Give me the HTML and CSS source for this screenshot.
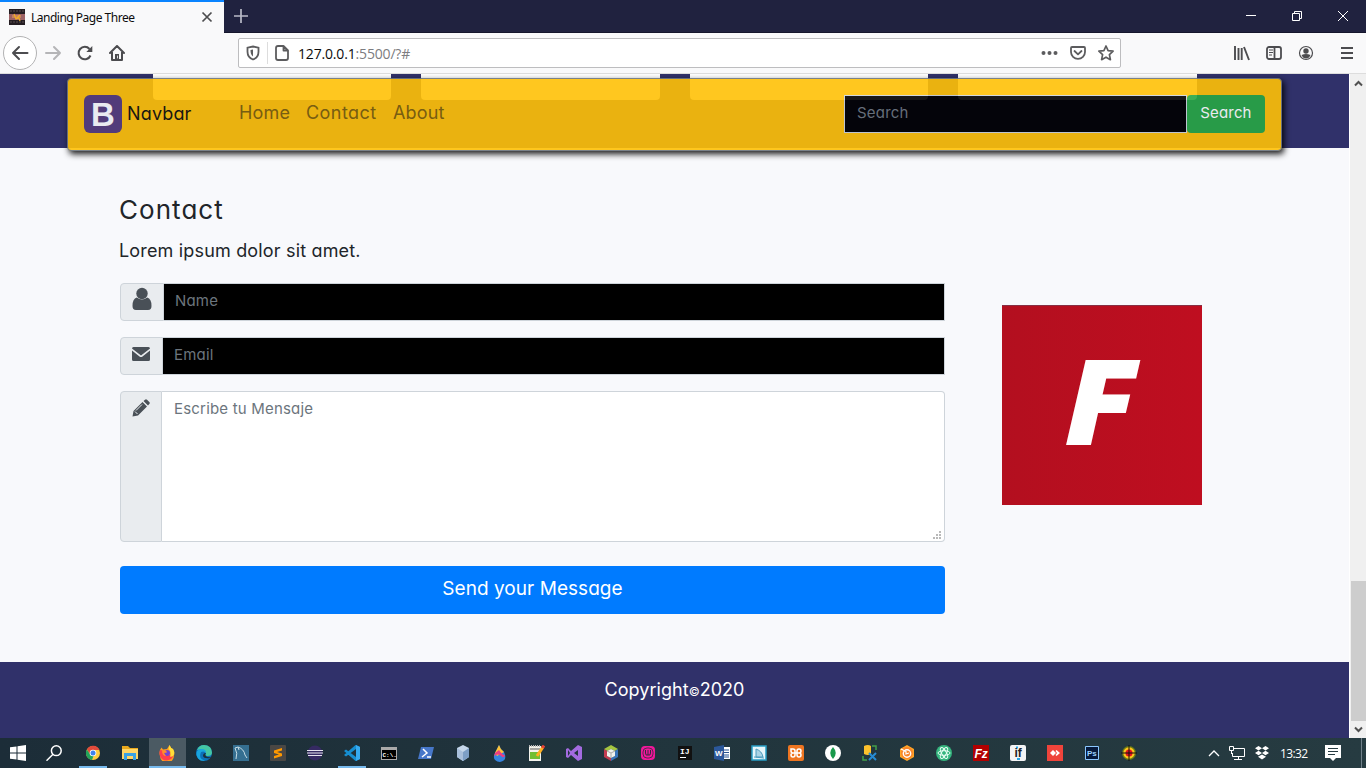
FILE: index.html
```html
<!DOCTYPE html>
<html lang="en">
<head>
<meta charset="utf-8">
<title>Landing Page Three</title>
<link rel="stylesheet" href="styles.css">
</head>
<body>
<header class="tabs">
  <div class="tab">
    <svg class="fav" width="16" height="16"><path fill="#241d22" d="M0 0h16v16H0z"/><path fill="#9c6265" d="M0 5h16v6H0z"/><path fill="#c5825d" d="M3 6h9v3H3z"/><path d="M5 5l2 5 3-1 1 3m0-6l-4 4" stroke="#f1ac28" stroke-width="1.3" fill="none"/><path d="M1 2h14M1 13h14" stroke="#5b5050" stroke-dasharray="2 1"/></svg>
    <span class="tabname">Landing Page Three</span>
    <svg width="12" height="12"><path d="M1.5 1.5l9 9m0-9l-9 9" stroke="#4d4d4f" stroke-width="1.7"/></svg>
  </div>
  <svg class="plus" width="14" height="14"><path d="M7 0v14M0 7h14" stroke="#b9bac7" stroke-width="1.7"/></svg>
  <div class="window-buttons">
    <svg width="12" height="12"><path d="M1 5.5h10" stroke="#fff"/></svg>
    <svg width="12" height="12" fill="none" stroke="#fff"><path d="M1.5 3.5h7v7h-7zM3.500 3.500v-2h7v7h-2"/></svg>
    <svg width="12" height="12"><path d="M1 1l10 10M11 1L1 11" stroke="#fff"/></svg>
  </div>
</header>
<div class="toolbar">
  <div class="back"><svg width="18" height="18" fill="none" stroke="#4c4c4f" stroke-width="2" stroke-linecap="round" stroke-linejoin="round"><path d="M16.500 9H2m6-6L2 9l6 6"/></svg></div>
  <svg class="fwd" width="18" height="18" fill="none" stroke="#b5b5b7" stroke-width="2" stroke-linecap="round" stroke-linejoin="round"><path d="M2 9h14m-6-6l6 6-6 6"/></svg>
  <svg class="reload" width="16" height="16" fill="none" stroke="#4c4c4f" stroke-width="2"><path d="M13.500 10.500A6.200 6.200 0 1 1 12.500 4"/><path d="M15.300 1v6h-6z" fill="#4c4c4f" stroke="none"/></svg>
  <svg class="home" width="16" height="16" fill="none" stroke="#4c4c4f" stroke-width="2" stroke-linejoin="round" stroke-linecap="round"><path d="M1 8l7-7 7 7M3 7v8h10V7"/><path d="M8 9v6" stroke-width="4" stroke-linecap="butt"/><path d="M8.500 11v2" stroke="#ddd" stroke-width="1"/></svg>
  <div class="address">
    <svg width="14" height="16" fill="none" stroke="#5c5c5e" stroke-width="1.800"><path d="M7 1.500l5.500 1.200v4c0 4-2 6.500-5.500 7.800C3.500 13.200 1.500 10.700 1.500 6.700v-4z"/><path d="M7 4.500v7C5 10 4.500 8 4.500 5z" fill="#5c5c5e" stroke="none"/></svg>
    <i class="sep"></i>
    <svg width="14" height="16" fill="none" stroke="#5c5c5e" stroke-width="1.800" stroke-linejoin="round"><path d="M3 1h5.500L13 5.500V13q0 2-2 2H3q-2 0-2-2V3q0-2 2-2zM8.500 1v4.500H13"/></svg>
    <span class="url">127.0.0.1<em>:5500/?#</em></span>
    <svg width="18" height="16" fill="#5c5c5e"><circle cx="3.500" cy="8" r="2"/><circle cx="9.500" cy="8" r="2"/><circle cx="15.500" cy="8" r="2"/></svg>
    <svg class="pocket" width="16" height="16" fill="none" stroke="#5c5c5e" stroke-width="1.800" stroke-linecap="round" stroke-linejoin="round"><path d="M2 2h12q1 0 1 1v4a7 6.800 0 0 1-14 0V3q0-1 1-1zM4.500 6L8 9.300 11.500 6"/></svg>
    <svg class="star" width="16" height="16" fill="none" stroke="#5c5c5e" stroke-width="1.700" stroke-linejoin="round"><path d="M8 1l2.100 4.600 5 .6-3.700 3.400 1 5.100L8 12.200l-4.400 2.500 1-5.100L.9 6.200l5-.6z"/></svg>
  </div>
  <svg class="library" width="16" height="16" stroke="#4c4c4f" stroke-width="1.900"><path d="M1 1v14M4.500 3v12M7.700 3v12M10 2L15 15"/></svg>
  <svg class="side" width="17" height="16" fill="none" stroke="#4c4c4f" stroke-width="1.800"><rect x="1" y="2" width="14" height="12" rx="2"/><path d="M8.500 2v12"/><path d="M3 5h4M3 7.500h4M3 10h3" stroke-width="1"/></svg>
  <svg class="account" width="16" height="16"><circle cx="8" cy="8" r="6.500" fill="none" stroke="#4c4c4f" stroke-width="1.200"/><circle cx="8" cy="6" r="2.700" fill="#4c4c4f"/><path d="M3.500 10q4.500-2 9 0-1.500 3.500-4.500 3.500T3.500 10" fill="#4c4c4f"/></svg>
  <i class="tool-sep"></i>
  <svg class="burger" width="12" height="14" stroke="#4c4c4f" stroke-width="2"><path d="M0 2h12M0 7h12M0 12h12"/></svg>
</div>
<div class="view">
  <main class="page">
    <section class="cards"><i></i><i></i><i></i><i></i></section>
    <nav class="navbar">
      <b class="brand-logo">B</b><span class="brand">Navbar</span>
      <span class="link home-link">Home</span><span class="link contact-link">Contact</span><span class="link about-link">About</span>
      <div class="search-field">Search</div><div class="search-button">Search</div>
    </nav>
    <section class="contact">
      <div class="form">
        <h3>Contact</h3>
        <p>Lorem ipsum dolor sit amet.</p>
        <div class="group name">
          <div class="addon"><svg width="20" height="24" fill="#495057"><circle cx="10" cy="6.500" r="5.700"/><path d="M4.800 10.500Q10 14.500 15.200 10.500 19.500 11.500 19.500 19q0 4-3.500 4H4Q.500 23 .500 19q0-7.500 4.300-8.500"/></svg></div>
          <div class="input">Name</div>
        </div>
        <div class="group email">
          <div class="addon"><svg width="18" height="14" fill="#495057"><path d="M0 1.500Q0 0 1.500 0h15Q18 0 18 1.500L9 8.500zM0 3.500l7.500 6q1.500 1 3 0l7.500-6v9q0 1.500-1.500 1.500h-15Q0 14 0 12.500z"/></svg></div>
          <div class="input">Email</div>
        </div>
        <div class="group message">
          <div class="addon"><svg width="18" height="18" fill="#495057"><path d="M.5 17.500L1.500 12 10.500 3 15 7.500 6 16.500zM11.500 2L13 .700q1-.9 2 0L17.300 3q1 1 0 2L16 6.500z"/><path d="M3 12.500l2.500 2.500M4 11.500l6-6" stroke="#e9ecef"/></svg></div>
          <div class="input">Escribe tu Mensaje<svg class="grip" width="9" height="9" fill="#b9b9b9"><path d="M6 0h2v2H6zM3 3h2v2H3zM6 3h2v2H6zM0 6h2v2H0zM3 6h2v2H3zM6 6h2v2H6z"/></svg></div>
        </div>
        <div class="send">Send your Message</div>
      </div>
      <div class="logo"><svg width="200" height="200"><text transform="translate(62 139) scale(1.1 1)" class="f-mark">F</text></svg></div>
    </section>
    <footer>Copyright<small>©</small>2020</footer>
  </main>
  <aside class="scroll">
    <svg width="9" height="7" fill="none" stroke="#505050" stroke-width="2"><path d="M1 5.500L4.500 2 8 5.500"/></svg>
    <i class="thumb"></i>
    <svg width="9" height="7" fill="none" stroke="#505050" stroke-width="2"><path d="M1 1.500L4.500 5 8 1.500"/></svg>
  </aside>
</div>
<div class="taskbar">
  <div class="start"><svg width="16" height="16" fill="#fff"><path d="M0 2.300l6.500-.9v6.100H0zM7.500 1.200L16 0v7.500H7.500zM0 8.500h6.500v6.100L0 13.700zM7.500 8.500H16V16l-8.500-1.200z"/></svg></div>
  <div class="find"><svg width="16" height="16" fill="none" stroke="#fff" stroke-width="1.500"><circle cx="10.300" cy="5.700" r="4.900"/><path d="M7 9.200L.5 15.700"/></svg></div>
  <div class="app open"><svg width="16" height="16"><circle cx="8" cy="8" r="7" fill="#ffcd40"/><path d="M2 4.300A7 7 0 0 1 14.500 5H8L5 9.800z" fill="#e24a3b"/><path d="M1.900 4.500L5.500 10l3 1L7 15A7 7 0 0 1 1.900 4.500" fill="#21a35b"/><circle cx="8" cy="8" r="3.300" fill="#fff"/><circle cx="8" cy="8" r="2.500" fill="#3f82ed"/></svg></div>
  <div class="app"><svg width="16" height="16"><path d="M0 1h6l2 2h8v11H0z" fill="#e9a91d"/><path d="M0 4h16v10H0z" fill="#ffd667"/><path d="M2 8h12v7h-3v-4H5v4H2z" fill="#39a2e5"/></svg></div>
  <div class="app open active"><svg width="16" height="16"><path d="M10.500 0q1 3 3.500 4 2 3 1 6.500A7 7 0 0 1 1 11Q-.5 6 2.500 2.500L4 4.500 8 4z" fill="#ff9b20"/><path d="M1 5l3 .5 3 1 .5 4 5-1 2-1A7 7 0 0 1 1 11Q0 8 1 5" fill="#ff3e4c"/><path d="M10.500 0q1 3 3.500 4 2 3 1 5.500-1.500 3-4 2Q13 7 9.500 4z" fill="#ffdf39"/><circle cx="8" cy="8" r="3" fill="#7543d1"/><path d="M3 5l4 .5 1 2-3 .5 2 3Q3 11 3 5" fill="#ff8e2b"/></svg></div>
  <div class="app"><svg width="16" height="16"><circle cx="8" cy="8" r="8" fill="#0c70b9"/><path d="M1 5Q3 0 8 0q7.500 0 8 7.500 0 4-5.500 3.500-1.500-1-.5-3Q8 3 1 5" fill="#44c6a4"/><path d="M5 7q-3 7 4 8.500Q2.500 17 .5 10 0 4 6 4q4 0 4 4-2-2.500-5-1" fill="#19a5df"/><path d="M9 10q2 3 6 2l-1 1q-6 1-7-2 0-3 3-3" fill="#1b303c"/></svg></div>
  <div class="app"><svg width="16" height="16"><path fill="#356f91" d="M0 0h16v16H0z"/><path d="M3 14Q5 8 2 3l3-1q6 2 7 8l2 3M5 2l1 3" stroke="#c6dce5" fill="none"/></svg></div>
  <div class="app"><svg width="16" height="16"><rect width="16" height="16" rx="1" fill="#4a4744"/><path d="M12 3L4 5.500V8l5 1.500-5 1.500v2.500l8-2.500V8.500L7 7l5-1.500z" fill="#ff9800"/></svg></div>
  <div class="app"><svg width="16" height="16"><circle cx="8" cy="8" r="7.500" fill="#352a62"/><path d="M0 5.500h16M0 8h16M1 10.500h14" stroke="#e5e2ee" stroke-width="1.200"/></svg></div>
  <div class="app open"><svg width="16" height="16"><path d="M11.500 0L16 2v12l-4.500 2L0 6l2-1.500L12 12V4L2 11.500 0 10z" fill="#168ed1"/><path d="M12 0l4 2v12l-4 2z" fill="#36aaf0"/></svg></div>
  <div class="app"><svg width="16" height="13"><path fill="#aaa" d="M0 0h16v13H0z"/><path fill="#000" d="M1 3h14v9H1z"/><text x="1.500" y="10" class="mono">C:\.</text></svg></div>
  <div class="app"><svg width="16" height="14"><path d="M3 1h13l-3 12H0z" fill="#4777c9"/><path d="M5 3l4 4-5 4m5 0h4" stroke="#fff" stroke-width="1.500" fill="none"/></svg></div>
  <div class="app"><svg width="14" height="16"><path d="M7 0l6 3v9l-6 4-6-4V3z" fill="#c5d7eb"/><path d="M7 7l6-4v9l-6 4z" fill="#7d9fc6"/><path d="M1 3l6 4v9l-6-4z" fill="#a8bfdb"/></svg></div>
  <div class="app"><svg width="14" height="17"><path d="M6 0q1 4 5 7 4 9-4 10Q-1 16 1.500 9z" fill="#3784df"/><path d="M6 0q1 4 5 7l-7 4-2-3z" fill="#ffc335"/><path d="M2 8l4-3q4 6 6 5-1 4-4 1T1 11z" fill="#ed3c82"/></svg></div>
  <div class="app"><svg width="16" height="16"><path fill="#f4f4ed" d="M0 1h12v15H0z"/><path fill="#71bf33" d="M1 7h10v7H1z"/><path d="M1 4h10" stroke="#555"/><path d="M0 1h12" stroke="#bbb" stroke-dasharray="1 1" stroke-width="2"/><path d="M8 11l6-9" stroke="#ffb020" stroke-width="3"/><path d="M13.300 3L15 .500" stroke="#e84335" stroke-width="3"/></svg></div>
  <div class="app"><svg width="16" height="16"><path d="M12 0l4 2v12l-4 2-7-6-3 3-2-1V4l2-1 3 3zM2 5v6l2-3zM12 5L8 8l4 3z" fill="#a36be0" fill-rule="evenodd"/></svg></div>
  <div class="app"><svg width="14" height="16"><path d="M7 0l7 4-3 2-4-2-4 2-3-2z" fill="#a5c540"/><path d="M0 4l3 2v5l4 2v3l-7-4z" fill="#c33b50"/><path d="M14 4l-3 2v5l-4 2v3l7-4z" fill="#3a75ba"/><path d="M7 4l4 2v5l-4 2-4-2V6z" fill="#f2f3ee"/><path d="M3 6l4 2 4-2M7 8v5" stroke="#aaa" fill="none"/></svg></div>
  <div class="app"><svg width="16" height="16"><rect x="1" y="1" width="14" height="14" rx="4" fill="#f0189a"/><rect x="3" y="3" width="10" height="10" rx="4" fill="none" stroke="#5b2450"/><path d="M5.500 5v3q0 3 2.500 2 2.500 1 2.500-2V5M8 5v5" fill="none" stroke="#36283f"/></svg></div>
  <div class="app"><svg width="14" height="14"><path fill="#111" d="M0 0h14v14H0z"/><text x="2" y="8" class="ij">IJ</text><path d="M2 11.500h6" stroke="#fff"/></svg></div>
  <div class="app"><svg width="16" height="16"><path fill="#fff" d="M8 2h8v12H8z"/><path d="M10 5h5M10 7.500h5M10 10h5M10 12h5" stroke="#295391"/><path d="M0 2l10-2v16L0 14z" fill="#2b579a"/><text x="1" y="11" class="word">W</text></svg></div>
  <div class="app"><svg width="16" height="16"><path fill="#e7f6fb" stroke="#299fc6" stroke-width="1.500" d="M1 1h14v14H1z"/><path d="M5 12V4q6 2 7 8z" fill="#a9d3e5" stroke="#4b9abc"/><path d="M3 12l10 1" stroke="#4b9abc"/></svg></div>
  <div class="app"><svg width="16" height="16"><rect width="16" height="16" rx="2" fill="#ee7521"/><path d="M3 4h2q2 0 2 2v4q0 2-2 2-2 0-2-2t2-2h6q2 0 2 2t-2 2-2-2V6q0-2 2-2t2 2-2 2H5Q3 8 3 6z" fill="none" stroke="#fff" stroke-width="1.500"/></svg></div>
  <div class="app"><svg width="16" height="16"><circle cx="8" cy="8" r="8" fill="#fff"/><path d="M8 2q5.500 6 0 12Q2.500 8 8 2" fill="#18994b"/></svg></div>
  <div class="app"><svg width="16" height="16"><path d="M2 1q4-2 7 0v8q-3 2-7 0z" fill="#fcc12c"/><path d="M10 1h4v4M1 11v4h4" fill="none" stroke="#43a049" stroke-width="1.500"/><path d="M7 8l7 7m0-7l-7 7" stroke="#278bd3" stroke-width="2"/></svg></div>
  <div class="app"><svg width="16" height="16"><path d="M8 0l7 4v8l-7 4-7-4V4z" fill="#ffa526"/><circle cx="8" cy="8" r="6" fill="#f9852a"/><circle cx="8" cy="8.500" r="3.700" fill="none" stroke="#fff" stroke-width="1.400"/><path d="M2 4l5 2.500V9l3-1" stroke="#fff" stroke-width="1.200" fill="none"/></svg></div>
  <div class="app"><svg width="16" height="16"><circle cx="8" cy="8" r="8" fill="#34b57e"/><g fill="none" stroke="#e9fff5" stroke-width="1"><ellipse cx="8" cy="8" rx="6" ry="2.300"/><ellipse cx="8" cy="8" rx="6" ry="2.300" transform="rotate(60 8 8)"/><ellipse cx="8" cy="8" rx="6" ry="2.300" transform="rotate(120 8 8)"/></g></svg></div>
  <div class="app"><svg width="16" height="16"><path fill="#b20000" d="M0 0h16v16H0z"/><text x="1.500" y="13" class="fz">Fz</text></svg></div>
  <div class="app"><svg width="16" height="16"><rect width="16" height="16" rx="2" fill="#f3f4f5"/><path d="M7 14h3M6 2.500h2" stroke="#26a6e4" stroke-width="2"/><text x="4.500" y="12" class="if">if</text></svg></div>
  <div class="app"><svg width="16" height="16"><path fill="#ef443b" d="M0 0h16v16H0z"/><path d="M6 5l3 3-3 3-3-3z" fill="#fff"/><path d="M9.500 5l3.500 3-3.500 3-1-1 1.500-2-1.500-2z" fill="#fff"/></svg></div>
  <div class="app"><svg width="14" height="14"><path fill="#061a3d" stroke="#8ac7ff" d="M.5.500h13v13H.5z"/><text x="2" y="10" class="ps">Ps</text></svg></div>
  <div class="app"><svg width="16" height="16"><circle cx="8" cy="8" r="7" fill="#697b16"/><circle cx="8" cy="8" r="5.700" fill="#ffc51a"/><circle cx="8" cy="8" r="3.500" fill="#e5131c"/><path d="M8 0v16M0 8h16" stroke="#111"/></svg></div>
  <div class="tray">
    <svg width="12" height="8"><path d="M1 7l5-5 5 5" fill="none" stroke="#fff" stroke-width="1.300"/></svg>
    <svg width="16" height="14" fill="none" stroke="#fff"><path d="M5 2.500h10.500v8H3.500V7M.5.500h4v4h-4zM2.500 5v3M9.500 10.500v3M5 13.500h8"/></svg>
    <svg width="16" height="14" fill="#fff"><path d="M4.500 0L8 2.200 4.500 4.500 1 2.200zM11.500 0L15 2.200 11.500 4.500 8 2.200zM4.500 4.700L8 7 4.500 9.200 1 7zM11.500 4.700L15 7l-3.500 2.200L8 7zM8 8.500l4 2.300L8 13.500l-4-2.700z"/></svg>
    <span>13:32</span>
    <svg class="note" width="16" height="16"><path d="M0 0h16v13h-5l-3 3-3-3H0z" fill="#fff"/><path d="M3 3.500h10M3 6.500h10M3 9.500h7" stroke="#263b41"/></svg>
    <i></i>
  </div>
</div>
</body>
</html>
```
FILE: styles.css
```css
* { box-sizing: border-box; }
body { margin: 0; width: 1366px; height: 768px; overflow: hidden; display: flex; flex-direction: column; font-family: Inter, "Noto Sans", sans-serif; font-feature-settings: "cv11" 1; color: #212529; }
svg { flex: none; display: block; }
.tabs { height: 33px; flex: none; background: #20223f; border-bottom: 1px solid #15162c; display: flex; align-items: center; }
.tab { height: 33px; width: 224px; flex: none; background: #f9f9fa; border-top: 2px solid #0a84ff; display: flex; align-items: center; padding: 0 11px 0 9px; }
.tabname { font: 12px "Noto Sans", sans-serif; color: #0c0c0d; margin-left: 6px; flex: 1; white-space: nowrap; letter-spacing: -.5px; }
.plus { margin-left: 10px; }
.window-buttons { margin-left: auto; display: flex; gap: 34px; padding-right: 17px; }
.toolbar { height: 41px; flex: none; background: #f9f9fa; border-bottom: 1px solid #ddd; display: flex; align-items: center; padding: 0 13px 0 3px; }
.back { width: 34px; height: 34px; flex: none; border: 1px solid #b2b2b3; border-radius: 50%; background: #fff; display: grid; place-items: center; }
.fwd { margin-left: 7px; }
.reload { margin-left: 15px; }
.home { margin-left: 16px; }
.address { width: 883px; height: 30px; flex: none; margin-left: 113px; border: 1px solid #bdbdbf; border-radius: 2px; background: #fff; display: flex; align-items: center; padding: 0 6px 0 7px; }
.sep { width: 1px; height: 22px; background: #ddd; margin: 0 7px; }
.url { font: 14px "Open Sans", sans-serif; color: #0c0c0d; margin-left: 9px; flex: 1; letter-spacing: -.17px; }
.url em { font-style: normal; color: #7c7c80; }
.pocket { margin-left: 12px; }
.star { margin-left: 12px; }
.library { margin-left: 113px; }
.side { margin-left: 16px; }
.account { margin-left: 15px; }
.tool-sep { width: 1px; height: 34px; background: #d4d4d6; margin: 0 15px 0 12px; }
.view { height: 664px; flex: none; display: flex; }
.page { width: 1349px; position: relative; background: #f8f9fc; display: flex; flex-direction: column; }
.cards { height: 74px; flex: none; background: #30316a; display: grid; grid-template-columns: 238px 239px 238px 239px; gap: 30px; padding-left: 153px; }
.cards i { height: 26px; background: #fff; border-radius: 0 0 4px 4px; }
.navbar { position: absolute; left: 67px; top: 4px; width: 1215px; height: 73px; border: 1px solid #6c757d; border-radius: 4px; background: #ffc107; opacity: .9; box-shadow: 2px 3px 6px #000; display: flex; align-items: center; padding: 0 16px; font-size: 18px; white-space: nowrap; }
.brand-logo { width: 38px; height: 38px; margin-bottom: 2px; border-radius: 6px; background: #563d7c; color: #fff; display: grid; place-items: center; font: bold 33px/40px "Liberation Sans", sans-serif; }
.brand { margin: 0 48px 3px 5px; width: 65px; color: #16140a; font-weight: 400; letter-spacing: .15px; }
.link { color: #806209; font-weight: 400; letter-spacing: .15px; margin-bottom: 4px; }
.home-link { width: 67px; margin-left: -1px; }
.contact-link { width: 87px; letter-spacing: .45px; }
.search-field { margin: 0 0 1px auto; width: 343px; height: 38px; border: 1px solid #ced4da; background: #000; color: #6c757d; font-size: 15px; line-height: 33px; padding-left: 12px; letter-spacing: .2px; }
.search-button { width: 78px; height: 38px; margin-bottom: 2px; border-radius: 4px; background: #28a745; color: #fff; font-size: 15px; line-height: 35px; text-align: center; letter-spacing: .15px; }
.contact { height: 514px; flex: none; display: flex; padding: 43px 147px 48px 120px; justify-content: space-between; }
.form { width: 825px; }
h3 { margin: 0 0 0 -1px; font-size: 26px; line-height: 37px; height: 45px; font-weight: 400; letter-spacing: 1.05px; }
p { margin: 0 0 0 -1px; font-size: 18px; line-height: 29px; height: 47px; font-weight: 400; letter-spacing: .17px; }
.group { display: flex; height: 38px; margin-bottom: 16px; color: #6c757d; font-size: 15px; line-height: 33px; letter-spacing: .19px; }
.addon { flex: none; border: 1px solid #ced4da; border-radius: 4px 0 0 4px; background: #e9ecef; padding-left: 11px; }
.name .addon { width: 44px; padding-top: 3px; }
.email .addon { width: 43px; padding-top: 9px; }
.message .addon { width: 42px; padding-top: 7px; }
.input { flex: 1; border: 1px solid #ced4da; border-left: 0; background: #000; padding-left: 11px; }
.message { height: 151px; margin-bottom: 24px; }
.message .input { background: #fff; border-radius: 0 4px 4px 0; position: relative; padding-left: 12px; }
.grip { position: absolute; right: 2px; bottom: 1px; }
.send { height: 48px; background: #007bff; color: #fff; border-radius: 4px; font-size: 19px; line-height: 45px; text-align: center; letter-spacing: .05px; }
.logo { width: 200px; height: 200px; margin-top: 114px; background: linear-gradient(90deg, #b30f1f, #bf0e20); border-top: 1px solid #873044; }
.f-mark { font: italic 800 118px "Open Sans", sans-serif; fill: #fff; }
footer { height: 76px; background: #30316a; color: #fff; text-align: center; font-size: 18px; line-height: 55px; letter-spacing: .05px; }
footer small { font-size: 12px; }
.scroll { width: 17px; background: #f0f0f0; border-left: 1px solid #fff; display: flex; flex-direction: column; align-items: center; padding: 6px 0 5px; }
.thumb { width: 15px; height: 140px; background: #cdcdcd; margin: auto 0 5px; }
.taskbar { height: 30px; flex: none; background: linear-gradient(90deg, #1c2d38, #21353d 50%, #263b41); display: flex; }
.start, .find { width: 36px; display: grid; place-items: center; }
.find { margin-right: 3px; }
.app { width: 37px; flex: none; display: grid; place-items: center; padding-right: 1px; position: relative; left: -1px; }
.app { left: 0; }
.active { background: #4b5a63; }
.open::after { content: ""; position: absolute; left: 4px; right: 5px; bottom: 0; height: 2px; background: #76b9ed; }
.active::after { left: 0; right: 0; }
.tray { margin-left: auto; display: flex; align-items: center; color: #fff; font: 12px "Open Sans", sans-serif; letter-spacing: -.6px; }
.tray svg + svg { margin-left: 9px; }
.tray span { margin-left: 10px; width: 28px; }
.tray .note { margin-left: 17px; }
.tray i { width: 1px; height: 30px; background: #71818a; margin: 0 4px 0 20px; }
.mono { font: bold 6px "Liberation Mono", monospace; fill: #fff; }
.ij { font: bold 8px "Liberation Mono", monospace; fill: #fff; }
.word { font: bold 8px "Liberation Sans", sans-serif; fill: #fff; }
.fz { font: italic bold 12px "Liberation Sans", sans-serif; fill: #fff; }
.if { font: bold 12px "Liberation Sans", sans-serif; fill: #222; }
.ps { font: bold 8px "Liberation Sans", sans-serif; fill: #9cd2ff; }
```
